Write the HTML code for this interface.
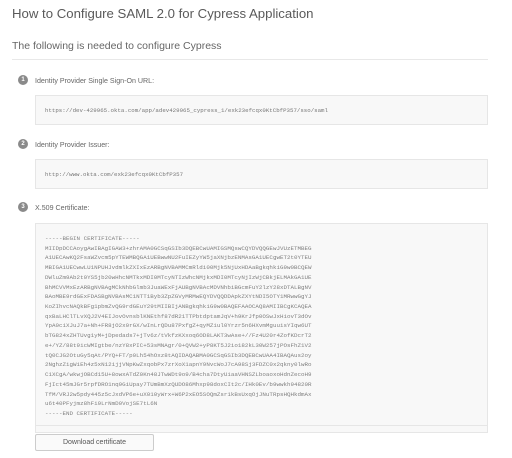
<!DOCTYPE html>
<html><head><meta charset="utf-8"><style>
*{margin:0;padding:0;box-sizing:border-box}
body{width:512px;height:458px;background:#fff;font-family:"Liberation Sans",sans-serif;color:#555;position:relative;overflow:hidden}
.a{position:absolute}
h1{position:absolute;left:12px;top:6px;font-size:13.2px;font-weight:normal;color:#5a5a5a;white-space:nowrap}
h2{position:absolute;left:12px;top:40px;font-size:10.5px;font-weight:normal;color:#666;white-space:nowrap}
.hr{left:12px;top:59px;width:476px;height:1px;background:#e8e8e8}
.c{width:10px;height:10px;border-radius:50%;background:#8a8a8a;color:#fff;font-size:6px;text-align:center;line-height:10px;font-weight:bold}
.l{font-size:7.1px;color:#666;white-space:nowrap}
.box{left:35px;width:453px;background:#f8f8f8;border:1px solid #e6e6e6}
.m{font-family:"Liberation Mono",monospace;font-size:5.75px;color:#777;white-space:pre}
.cert{font-family:"Liberation Mono",monospace;font-size:5.85px;color:#808080;white-space:pre;left:45px;top:234px}
.cert div{height:9.72px;line-height:9.72px}
.btn{left:35px;top:434px;width:119px;height:17px;border:1px solid #ccc;border-radius:2px;background:#fafafa;font-size:7px;color:#555;text-align:center;line-height:15px}
</style></head><body>
<h1>How to Configure SAML 2.0 for Cypress Application</h1>
<h2>The following is needed to configure Cypress</h2>
<div class="a hr"></div>
<div class="a c" style="left:18px;top:75px">1</div>
<div class="a l" style="left:35px;top:77px">Identity Provider Single Sign-On URL:</div>
<div class="a box" style="top:95px;height:30px"></div>
<div class="a m" style="left:45px;top:107px">https://dev-429965.okta.com/app/adev429965_cypress_1/exk23efcqx0KtCbfP357/sso/saml</div>
<div class="a c" style="left:18px;top:139px">2</div>
<div class="a l" style="left:35px;top:141px">Identity Provider Issuer:</div>
<div class="a box" style="top:159px;height:30px"></div>
<div class="a m" style="left:45px;top:171px">http://www.okta.com/exk23efcqx0KtCbfP357</div>
<div class="a c" style="left:18px;top:202px">3</div>
<div class="a l" style="left:35px;top:204px">X.509 Certificate:</div>
<div class="a box" style="top:223px;height:210px"></div>
<div class="a" style="left:36px;top:425px;width:451px;height:1px;background:#e6e6e6"></div>
<div class="a cert"><div>-----BEGIN CERTIFICATE-----</div><div>MIIDpDCCAoygAwIBAgIGAW3+zhrAMA0GCSqGSIb3DQEBCwUAMIGSMQswCQYDVQQGEwJVUzETMBEG</div><div>A1UECAwKQ2FsaWZvcm5pYTEWMBQGA1UEBwwNU2FuIEZyYW5jaXNjbzENMAsGA1UECgwET2t0YTEU</div><div>MBIGA1UECwwLU1NPUHJvdmlkZXIxEzARBgNVBAMMCmRldi00Mjk5NjUxHDAaBgkqhkiG9w0BCQEW</div><div>DWluZm9Ab2t0YS5jb20wHhcNMTkxMDI0MTcyNTIzWhcNMjkxMDI0MTcyNjIzWjCBkjELMAkGA1UE</div><div>BhMCVVMxEzARBgNVBAgMCkNhbGlmb3JuaWExFjAUBgNVBAcMDVNhbiBGcmFuY2lzY28xDTALBgNV</div><div>BAoMBE9rdGExFDASBgNVBAsMC1NTT1Byb3ZpZGVyMRMwEQYDVQQDDApkZXYtNDI5OTY1MRwwGgYJ</div><div>KoZIhvcNAQkBFg1pbmZvQG9rdGEuY29tMIIBIjANBgkqhkiG9w0BAQEFAAOCAQ8AMIIBCgKCAQEA</div><div>qxBaLHClTLvXQJ2V4EIJovOvnsblKNEthf87dR21TTPbtdptamJqV+h9KrJfp0OSwJxHiovT3dOv</div><div>YpA0ciXJuJ7a+Nh+FR8jO2x0rGX/wInLrQDu87PxfgZ+qyMZiul0Yrzr5n6HXvmMguuisYIqw6UT</div><div>bTG824xZHTUvg1yM+jDpedads7+jTv6z/tVkfzKXxoq6OD8LAKT3wAse+//Fz4U20r4ZofKDcrT2</div><div>e+/YZ/88t9icWMIgtbe/nzY8xPIC+53sMNAgr/0+QVW2+yP8KT5J2io182kL30W257jPOsFhZ1V2</div><div>tQ0CJG2OtuGy5qAt/PYQ+FT/p0Lh54hOxz8tAQIDAQABMA0GCSqGSIb3DQEBCwUAA4IBAQAus2oy</div><div>2NghzZigWiEh4z5xN12ijjVNpKwZxqobPx7zrXoX1apnY9NvcWoJ7cA98Sj3FDZC0x2qkny0lwRo</div><div>C1XCgA/wkwjOBCd15U+8owxATdZ0Kn48JTwWDt9o9/B4cha7DtyUiaaVHNSZLboaoxoHdnZecoH9</div><div>FjIct45mJGr5rpfDRO1nq9GiUpay7TUmBmXzQUDO86Mhxp98doxCIt2c/IHk0Ev/b9wwkh94820R</div><div>TfM/VRJ2w5pdy445z5cJxdVP6e+uX010yWrx+W6P2xEO5SOQmZsr1kBsUxqOjJNuTRpsHQHkdmAx</div><div>u6t40PFyjmz8hFi9LrNmD0VojSE7tL6N</div><div>-----END CERTIFICATE-----</div></div>
<div class="a btn">Download certificate</div>
</body></html>
